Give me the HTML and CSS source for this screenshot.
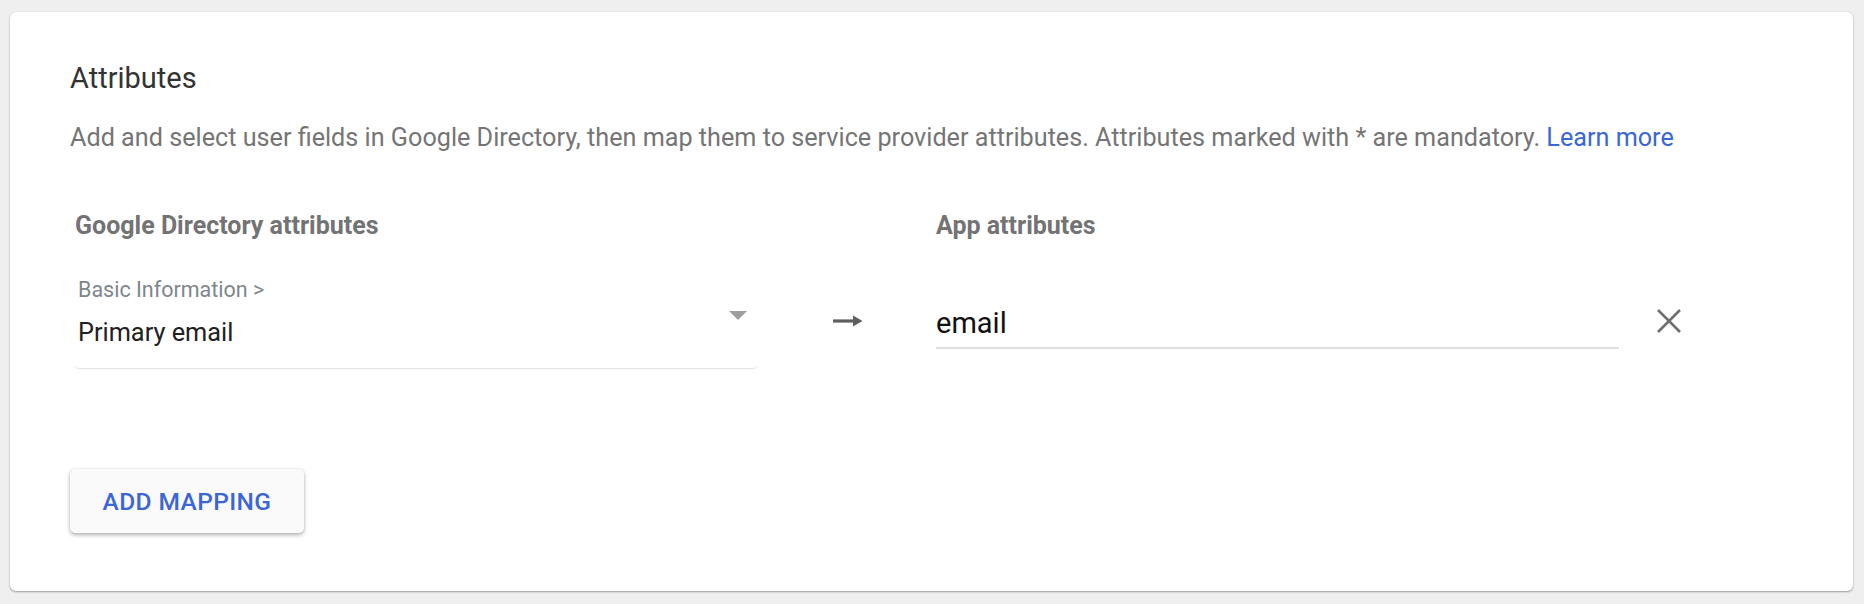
FILE: index.html
```html
<!DOCTYPE html>
<html>
<head>
<meta charset="utf-8">
<link rel="stylesheet" href="styles.css">
</head>
<body>
<div class="card">
  <h2 class="title">Attributes</h2>
  <p class="desc">Add and select user fields in Google Directory, then map them to service provider attributes. Attributes marked with * are mandatory. <a class="link" href="#">Learn more</a></p>
  <div class="grid">
    <div class="col-head">Google Directory attributes</div>
    <div></div>
    <div class="col-head">App attributes</div>
    <div></div>
    <div class="select">
      <div class="sel-label">Basic Information &gt;</div>
      <div class="sel-value">Primary email</div>
      <span class="caret"></span>
    </div>
    <div class="arrow">
      <svg width="30" height="12" viewBox="0 0 30 12"><path d="M0 6h24" stroke="#5f5f5f" stroke-width="3.2"/><path d="M20 0.5l9.5 5.5-9.5 5.5z" fill="#5f5f5f"/></svg>
    </div>
    <div class="input">email</div>
    <div class="close">
      <svg width="26" height="26" viewBox="0 0 26 26"><path d="M2 2L24 24M24 2L2 24" stroke="#6f6f6f" stroke-width="2.6"/></svg>
    </div>
  </div>
  <button class="btn">ADD MAPPING</button>
</div>
</body>
</html>
```
FILE: styles.css
```css
html, body { margin: 0; padding: 0; }
body {
  background: #efefef;
  font-family: Roboto, "Noto Sans", sans-serif;
  height: 604px;
  overflow: hidden;
}
.card {
  margin: 12px 11px 0 10px;
  height: 579px;
  box-sizing: border-box;
  background: #fff;
  border-radius: 6px;
  box-shadow: 0 1px 2px rgba(0,0,0,0.35), 0 0 1px rgba(0,0,0,0.12);
  padding: 50px 60px 0 60px;
}
.title {
  margin: 0;
  font-size: 29px;
  line-height: 32px;
  font-weight: 400;
  color: #333;
}
.desc {
  margin: 28px 0 0 0;
  font-size: 25.2px;
  line-height: 32px;
  color: #757575;
  white-space: nowrap;
}
.link { color: #3b66d6; text-decoration: none; }
.grid {
  margin: 58px 0 0 5px;
  display: grid;
  grid-template-columns: 682px 179px 683px 80px;
  align-items: start;
}
.col-head {
  font-size: 25px;
  line-height: 28px;
  font-weight: 700;
  color: #737373;
  margin-bottom: 38px;
}
.select {
  position: relative;
  padding: 0 0 19px 3px;
  border-bottom: 1px solid #e6e6e6;
  border-radius: 0 0 4px 4px;
  box-shadow: 0 1px 0 rgba(0,0,0,0.03);
}
.sel-label {
  font-size: 21.5px;
  line-height: 24px;
  color: #80868b;
}
.sel-value {
  margin-top: 15px;
  font-size: 25.3px;
  line-height: 32px;
  color: #212121;
}
.caret {
  position: absolute;
  right: 10px;
  top: 33px;
  width: 0; height: 0;
  border-left: 9px solid transparent;
  border-right: 9px solid transparent;
  border-top: 9px solid #9e9e9e;
}
.arrow {
  padding: 37px 0 0 76px;
  line-height: 0;
}
.input {
  margin-top: 29px;
  font-size: 29px;
  line-height: 32px;
  color: #111;
  padding-bottom: 8px;
  border-bottom: 2px solid #e0e0e0;
}
.close {
  padding: 30px 0 0 37px;
  line-height: 0;
}
.btn {
  display: block;
  margin-top: 100px;
  width: 234px;
  height: 64px;
  border: none;
  border-radius: 5px;
  background: #fafafa;
  box-shadow: 0 2px 4px rgba(0,0,0,0.3), 0 0 2px rgba(0,0,0,0.1);
  font-family: Roboto, sans-serif;
  font-size: 24.5px;
  font-weight: 500;
  color: #3b66d6;
  letter-spacing: 0.4px;
  padding: 0;
}
```
